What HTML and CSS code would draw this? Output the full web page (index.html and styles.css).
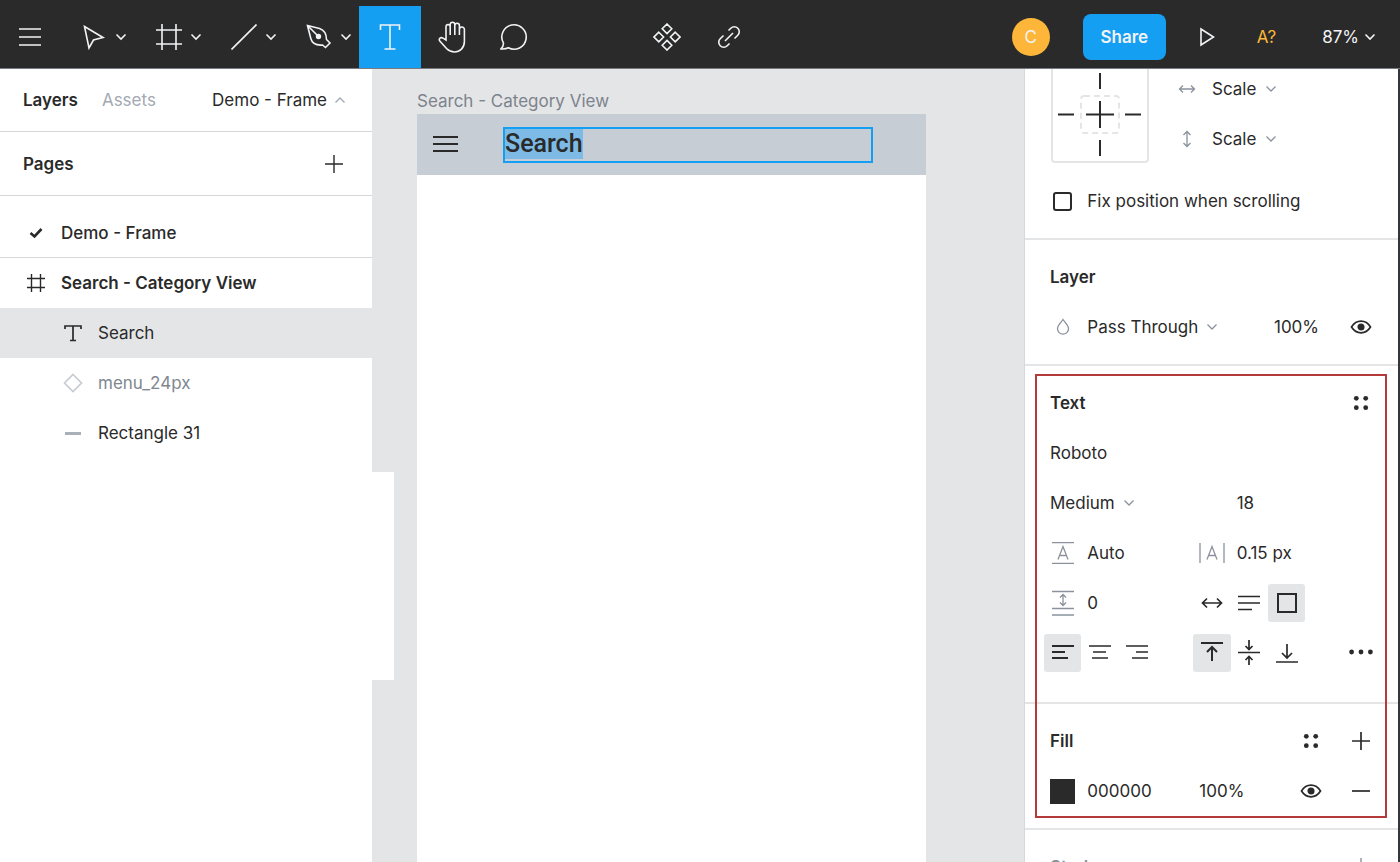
FILE: index.html
```html
<!DOCTYPE html>
<html lang="en">
<head>
<meta charset="utf-8">
<title>Demo - Frame</title>
<link rel="stylesheet" href="styles.css">
</head>
<body>
<svg class="defs" aria-hidden="true">
  <symbol id="chev" viewBox="0 0 12 8"><path d="M1.500 1.500 6 6l4.500-4.500"/></symbol>
  <symbol id="eye" viewBox="0 0 22 16"><path d="M1.500 8C4 4 7.500 2.200 11 2.200S18 4 20.500 8C18 12 14.500 13.800 11 13.800S4 12 1.500 8z"/><circle cx="11" cy="8" r="2.700" fill="currentColor"/></symbol>
  <symbol id="dots" viewBox="0 0 18 18"><g fill="currentColor" stroke="none"><circle cx="4.300" cy="4.300" r="2.400"/><circle cx="13.700" cy="4.300" r="2.400"/><circle cx="4.300" cy="13.700" r="2.400"/><circle cx="13.700" cy="13.700" r="2.400"/></g></symbol>
  <symbol id="plus" viewBox="0 0 18 18"><path d="M9 0v18M0 9h18"/></symbol>
</svg>
<div class="app">
  <header class="toolbar">
    <nav class="tools" aria-label="Tools">
      <button class="tool menu" aria-label="Menu"><svg width="24" height="18" viewBox="0 0 24 18"><path d="M1 1h22M1 9h22M1 17h22"/></svg></button>
      <div class="tool-group">
        <button class="tool" aria-label="Move"><svg width="24" height="26" viewBox="0 0 24 26"><path d="M2.500 2.500 21 13.500l-9.500 2.500-4.500 8z"/></svg></button>
        <button class="more" aria-label="Move options"><svg width="12" height="8"><use href="#chev"/></svg></button>
      </div>
      <div class="tool-group">
        <button class="tool" aria-label="Frame"><svg width="26" height="26" viewBox="0 0 26 26"><path d="M6 0v26M20 0v26M0 6h26M0 20h26"/></svg></button>
        <button class="more" aria-label="Frame options"><svg width="12" height="8"><use href="#chev"/></svg></button>
      </div>
      <div class="tool-group">
        <button class="tool" aria-label="Line"><svg width="26" height="26" viewBox="0 0 26 26"><path d="M.5 25.500l25-25"/></svg></button>
        <button class="more" aria-label="Shape options"><svg width="12" height="8"><use href="#chev"/></svg></button>
      </div>
      <div class="tool-group">
        <button class="tool" aria-label="Pen"><svg width="26" height="26" viewBox="0 0 26 26"><path d="M1.500 1.500 13.500 4.500C18 6 20.500 9.500 20.500 15.500L24 19l-4.500 4.500-3-2.500C10.500 21.500 6 19 4.800 14.500zM1.500 1.500l10 10"/><circle cx="12.500" cy="12.500" r="1.900" fill="currentColor"/></svg></button>
        <button class="more" aria-label="Pen options"><svg width="12" height="8"><use href="#chev"/></svg></button>
      </div>
      <button class="tool wide active" aria-label="Text"><svg width="22" height="28" viewBox="0 0 22 28"><path d="M1.500 7V2h19v5M11 2v24M5.500 26h11"/></svg></button>
      <button class="tool wide" aria-label="Hand"><svg width="28" height="32" viewBox="0 0 28 32"><path d="M8 19V6a2 2 0 0 1 4.200-.500V14 3.500a2.300 2.300 0 0 1 4.600 0V14 4.500a2.200 2.200 0 0 1 4.600 0V14 8.500a2.200 2.200 0 0 1 5 0V20.500c0 6.500-4.500 10.500-9.900 10.500-3.500 0-6-1.500-8-3.500L1.800 20c-1.500-2.500 1-4.300 3.200-2.800z"/></svg></button>
      <button class="tool wide" aria-label="Comment"><svg width="28" height="28" viewBox="0 0 28 28"><path d="M.8 26c2-1.800 2.700-3.500 2.700-5.800a12.200 12.200 0 1 1 4.800 4.600c-2 1.200-4.700 1.400-7.500 1.200z"/></svg></button>
    </nav>
    <div class="middle">
      <button class="tool wide" aria-label="Create component"><svg width="28" height="28" viewBox="0 0 28 28"><path d="M14 1l4.800 4.800L14 10.600 9.200 5.800zM14 17.400l4.800 4.800L14 27l-4.800-4.800zM5.800 9.200l4.800 4.800-4.800 4.800L1 14zM22.200 9.200 27 14l-4.800 4.800-4.800-4.800z"/></svg></button>
      <button class="tool wide" aria-label="Create link"><svg width="24" height="24" viewBox="0 0 24 24"><path d="M11.500 5.500l2.300-2.300a4.900 4.900 0 0 1 7 7L17.500 13.500M6.500 10.500 3.200 13.800a4.900 4.900 0 0 0 7 7l2.300-2.300M8 16l8-8"/></svg></button>
    </div>
    <div class="account">
      <span class="avatar">C</span>
      <button class="share">Share</button>
      <button class="tool play" aria-label="Present"><svg width="16" height="20" viewBox="0 0 16 20"><path d="M2 2l12.500 8L2 18z"/></svg></button>
      <button class="missing">A?</button>
      <button class="zoom">87%<svg width="12" height="8"><use href="#chev"/></svg></button>
    </div>
  </header>
  <main class="workspace">
    <aside class="left">
      <div class="tabs">
        <button class="strong">Layers</button><button class="muted">Assets</button>
        <button class="page-toggle">Demo - Frame<svg class="up" width="12" height="8"><use href="#chev"/></svg></button>
      </div>
      <div class="pages-head"><h2>Pages</h2><button aria-label="Add page"><svg width="18" height="18"><use href="#plus"/></svg></button></div>
      <div class="pages"><button class="row medium"><span class="glyph"><svg class="tick" width="14" height="12" viewBox="0 0 14 12"><path d="M1.500 6l4 3.500 7-7.500"/></svg></span>Demo - Frame</button></div>
      <button class="row strong"><span class="glyph"><svg width="18" height="18" viewBox="0 0 18 18"><path d="M4.500 0v18M13.500 0v18M0 4.500h18M0 13.500h18"/></svg></span>Search - Category View</button>
      <button class="row child selected"><span class="glyph"><svg class="mid" width="18" height="18" viewBox="0 0 18 18"><path d="M1 5V2h16v3M9 2v14.500M6 16.500h6"/></svg></span>Search</button>
      <button class="row child component"><span class="glyph"><svg class="mid" width="20" height="20" viewBox="0 0 20 20"><path d="M10 1.500l8.500 8.500-8.500 8.500L1.500 10z"/></svg></span>menu_24px</button>
      <button class="row child"><span class="glyph"><i class="bar"></i></span>Rectangle 31</button>
      <div class="flyout"></div>
    </aside>
    <section class="canvas">
      <div class="frame-label">Search - Category View</div>
      <div class="frame">
        <div class="app-bar">
          <svg width="25" height="18" viewBox="0 0 25 18"><path d="M0 1h25M0 8h25M0 15h25"/></svg>
          <div class="edit-box"><span>Search</span></div>
        </div>
      </div>
    </section>
    <aside class="right">
      <section class="constraints">
        <div class="constraint-row">
          <div class="constraint-box"><svg width="98" height="94" viewBox="0 0 98 94"><rect class="dash" x="30" y="27" width="38" height="37" rx="3"/><path d="M49 4v16M49 71v16M7 45.500h16M74 45.500h16M49 32v27M35 45.500h28"/></svg></div>
          <div class="scales">
            <label><svg class="soft" width="24" height="12" viewBox="0 0 24 12"><path d="M5 6h14M8 2.500 4.500 6 8 9.500M16 2.500l3.500 3.500-3.500 3.500"/></svg><select aria-label="Horizontal constraint"><option>Scale</option></select><svg class="soft" width="12" height="8"><use href="#chev"/></svg></label>
            <label><svg class="soft" width="24" height="18" viewBox="0 0 24 18"><path d="M12 2v14M8.500 5 12 1.500 15.500 5M8.500 13l3.500 3.500 3.500-3.500"/></svg><select aria-label="Vertical constraint"><option>Scale</option></select><svg class="soft" width="12" height="8"><use href="#chev"/></svg></label>
          </div>
        </div>
        <div class="prop"><input class="check c1" type="checkbox" id="fix"><label class="c2 rest" for="fix">Fix position when scrolling</label></div>
      </section>
      <section class="panel">
        <div class="prop"><h2 class="c1 rest">Layer</h2></div>
        <div class="prop">
          <span class="c1 icon"><svg class="soft" width="14" height="18" viewBox="0 0 14 18"><path d="M7 1.500c2 3 5.500 6 5.500 9.200A5.500 5.500 0 0 1 7 16.200a5.500 5.500 0 0 1-5.500-5.500C1.500 7.500 5 4.500 7 1.500z"/></svg></span>
          <label class="c2 pick"><select aria-label="Blend mode"><option>Pass Through</option></select><svg class="soft" width="12" height="8"><use href="#chev"/></svg></label>
          <input class="c7 field" aria-label="Layer opacity" value="100%">
          <button class="c9 icon" aria-label="Toggle layer"><svg class="mid" width="22" height="16"><use href="#eye"/></svg></button>
        </div>
      </section>
      <div class="marked">
        <section class="panel text-panel">
          <div class="prop"><h2 class="c1 rest">Text</h2><button class="c9 icon" aria-label="Text styles"><svg width="18" height="18"><use href="#dots"/></svg></button></div>
          <div class="prop"><input class="c1 field long" aria-label="Font family" value="Roboto"></div>
          <div class="prop"><label class="c1 pick"><select aria-label="Font weight"><option>Medium</option></select><svg class="soft" width="12" height="8"><use href="#chev"/></svg></label><input class="c6 field" aria-label="Font size" value="18"></div>
          <div class="prop">
            <span class="c1 icon"><svg class="soft" width="22" height="22" viewBox="0 0 22 22"><path d="M0 .5h22M0 21.500h22M6 17.500 11 4.500l5 13M7.500 13.500h7"/></svg></span><input class="c2 field" aria-label="Line height" value="Auto">
            <span class="c5 icon"><svg class="soft" width="26" height="20" viewBox="0 0 26 20"><path d="M1 0v20M25 0v20M8 16.500 13 3.500l5 13M9.500 12.500h7"/></svg></span><input class="c6 field" aria-label="Letter spacing" value="0.15 px">
          </div>
          <div class="prop">
            <span class="c1 icon"><svg class="soft" width="22" height="26" viewBox="0 0 22 26"><path d="M0 1.500h22M0 18.500h22M0 25h22M11 4.500v11M8 7.500l3-3 3 3M8 12.500l3 3 3-3"/></svg></span><input class="c2 field" aria-label="Paragraph spacing" value="0">
            <button class="c5 icon" aria-label="Auto width"><svg class="mid" width="22" height="12" viewBox="0 0 22 12"><path d="M1.500 6h19M6 1.500 1.500 6 6 10.500M16 1.500 20.500 6 16 10.500"/></svg></button>
            <button class="c6 icon" aria-label="Auto height"><svg class="mid" width="22" height="16" viewBox="0 0 22 16"><path d="M0 1.500h22M0 8h22M0 14.500h14"/></svg></button>
            <button class="c7 icon on" aria-label="Fixed size"><svg class="bold" width="20" height="20" viewBox="0 0 20 20"><path d="M1 1h18v18H1z"/></svg></button>
          </div>
          <div class="prop">
            <button class="c1 icon on" aria-label="Align left"><svg class="bold" width="22" height="16" viewBox="0 0 22 16"><path d="M0 1h22M0 7h13M0 13h16"/></svg></button>
            <button class="c2 icon" aria-label="Align center"><svg class="mid" width="22" height="16" viewBox="0 0 22 16"><path d="M0 1h22M4 7h13M3 13h16"/></svg></button>
            <button class="c3 icon" aria-label="Align right"><svg class="mid" width="22" height="16" viewBox="0 0 22 16"><path d="M0 1h22M10 7h12M6 13h16"/></svg></button>
            <button class="c5 icon on" aria-label="Align top"><svg class="bold" width="22" height="22" viewBox="0 0 22 22"><path d="M0 1h22M11 19V5M6 10l5-5 5 5"/></svg></button>
            <button class="c6 icon" aria-label="Align middle"><svg class="mid" width="22" height="26" viewBox="0 0 22 26"><path d="M0 12.500h22M11 0v9M7.500 6 11 9.500 14.500 6M11 25v-8M7.500 20l3.500-3.500 3.500 3.500"/></svg></button>
            <button class="c7 icon" aria-label="Align bottom"><svg class="mid" width="22" height="22" viewBox="0 0 22 22"><path d="M0 20h22M11 2v13.500M6 11l5 5 5-5"/></svg></button>
            <button class="c9 icon" aria-label="More type settings"><svg class="ellipsis" width="24" height="8" viewBox="0 0 24 8"><circle cx="2.600" cy="3" r="2.400"/><circle cx="12" cy="3" r="2.400"/><circle cx="21.400" cy="3" r="2.400"/></svg></button>
          </div>
        </section>
        <section class="panel">
          <div class="prop"><h2 class="c1 rest">Fill</h2><button class="c8 icon" aria-label="Fill styles"><svg width="18" height="18"><use href="#dots"/></svg></button><button class="c9 icon" aria-label="Add fill"><svg class="mid" width="18" height="18"><use href="#plus"/></svg></button></div>
          <div class="prop"><button class="c1 icon" aria-label="Fill color"><i class="swatch"></i></button><input class="c2 field long" aria-label="Fill hex" value="000000"><input class="c5 field" aria-label="Fill opacity" value="100%"><button class="c8 icon" aria-label="Toggle fill"><svg class="mid" width="22" height="16"><use href="#eye"/></svg></button><button class="c9 icon" aria-label="Remove fill"><svg class="mid" width="18" height="18" viewBox="0 0 18 18"><path d="M0 9h18"/></svg></button></div>
        </section>
        <div class="highlight"></div>
      </div>
      <section class="panel stroke-panel"><div class="prop"><h2 class="c1 rest">Stroke</h2><button class="c9 icon" aria-label="Add stroke"><svg width="18" height="18"><use href="#plus"/></svg></button></div></section>
    </aside>
  </main>
</div>
</body>
</html>
```
FILE: styles.css
```css
* { box-sizing: border-box; }
body { margin: 0; font: 17px/24px Inter, sans-serif; color: #2a2a2a; overflow: hidden; }
button, input, select { font: inherit; color: inherit; background: none; border: 0; padding: 0; margin: 0; border-radius: 0; }
select { appearance: none; }
h2 { margin: 0; font-size: 17px; line-height: 24px; font-weight: 600; }
svg { display: block; flex: none; fill: none; stroke: currentColor; stroke-width: 1.4; }
.defs { position: absolute; width: 0; height: 0; }
.app { height: 100vh; display: flex; flex-direction: column; }
.bold { stroke-width: 2; }
.mid { stroke-width: 1.7; }
.soft { color: #8b929d; stroke-width: 1.3; }

.toolbar { flex: none; height: 69px; display: grid; grid-template-columns: 1fr auto 1fr; background: #2a2a2a; color: #f2f3f5; border-bottom: 1px solid #777c83; padding-top: 6px; }
.toolbar svg { stroke-width: 1.6; }
.tools, .middle, .account, .tool-group { display: flex; align-items: stretch; }
.tool { display: flex; align-items: center; justify-content: center; }
.menu { width: 59px; }
.tool-group { width: 75px; padding-left: 21px; }
.tool-group .tool { width: 28px; }
.more { width: 26px; display: flex; align-items: center; justify-content: center; }
.wide { width: 62px; }
.active { background: #159ff3; }
.middle { margin-right: 4px; }
.account { justify-content: flex-end; align-items: center; padding-right: 24px; }
.avatar { width: 38px; height: 38px; border-radius: 50%; background: #fdb639; text-align: center; line-height: 38px; margin-right: 33px; }
.share { width: 83px; height: 46px; border-radius: 8px; background: #159ff3; font-weight: 600; margin-right: 33px; }
.missing { color: #fdb639; margin: 0 46px 0 42px; }
.zoom { display: flex; align-items: center; gap: 5px; }

.workspace { flex: 1; min-height: 0; display: flex; }
.left { position: relative; width: 372px; flex: none; background: #fff; }
.tabs { display: flex; align-items: center; gap: 24px; height: 63px; padding: 0 26px 0 23px; border-bottom: 1px solid #d6d8db; }
.strong { font-weight: 600; }
.medium { font-weight: 500; }
.muted { color: #a3a9b3; }
.page-toggle { display: flex; align-items: center; gap: 7px; margin-left: auto; }
.up { transform: rotate(180deg); color: #a3a9b3; }
.pages-head { display: flex; align-items: center; justify-content: space-between; height: 64px; padding: 0 29px 0 23px; border-bottom: 1px solid #d6d8db; }
.pages { height: 62px; padding-top: 12px; border-bottom: 1px solid #d6d8db; }
.row { display: flex; align-items: center; width: 100%; height: 50px; padding-left: 24px; text-align: left; }
.glyph { display: flex; align-items: center; justify-content: center; width: 24px; margin-right: 13px; }
.tick { stroke-width: 2.6; }
.child { padding-left: 61px; }
.selected { background: #e4e5e7; }
.component { color: #808791; }
.component svg { color: #c7ccd4; }
.bar { width: 16px; height: 3px; background: #a9b0ba; }
.flyout { position: absolute; left: 100%; top: 403px; width: 22px; height: 208px; background: #fff; }

.canvas { flex: 1; min-width: 0; display: flex; flex-direction: column; padding: 20px 98px 0 45px; background: #e4e5e7; }
.frame-label { height: 25px; color: #7d838c; white-space: nowrap; }
.frame { flex: 1; background: #fff; }
.app-bar { display: flex; align-items: center; gap: 45px; height: 61px; padding: 0 53px 0 16px; background: #c7cdd5; }
.app-bar svg { stroke-width: 2; }
.edit-box { flex: 1; height: 36px; border: 2px solid #159ff3; font: 500 25px/30px Roboto, sans-serif; }
.edit-box span { display: inline-block; background: #7dbbe6; }

.right { width: 376px; flex: none; overflow: hidden; border-left: 1px solid #d6d8db; border-right: 2px solid #33363a; background: #fff; }
.constraints { border-bottom: 2px solid #e4e5e7; padding-bottom: 12px; }
.constraint-row { display: flex; gap: 26px; padding: 0 0 7px 26px; }
.constraint-box { width: 98px; height: 94px; border: 2px solid #e4e5e7; border-top: 0; border-radius: 0 0 4px 4px; }
.constraint-box svg { margin-left: -2px; stroke-width: 2; }
.dash { stroke: #e4e5e7; stroke-dasharray: 6 4; }
.scales { display: flex; flex-direction: column; }
.scales label { display: flex; align-items: center; height: 40px; gap: 8px; }
.scales label + label { height: 60px; }
.scales select { margin-left: 5px; }
.panel { padding: 12px 0; border-bottom: 2px solid #e4e5e7; }
.text-panel { padding-bottom: 24px; }
.prop { display: grid; grid-template-columns: repeat(9, 1fr); align-items: center; height: 50px; padding: 0 18px 0 19px; }
.prop > * { grid-row: 1; min-width: 0; }
.c1 { grid-column: 1; }
.c2 { grid-column: 2; }
.c3 { grid-column: 3; }
.c5 { grid-column: 5; }
.c6 { grid-column: 6; }
.c7 { grid-column: 7; }
.c8 { grid-column: 7 / 9; padding-left: 12px; }
.c9 { grid-column: 9; }
.rest { grid-column-end: 9; padding-left: 6px; }
.c1.rest { grid-column-end: 7; }
.pick { grid-column-end: span 4; display: flex; align-items: center; gap: 8px; padding-left: 6px; }
.field { grid-column-end: span 2; width: 100%; padding-left: 6px; }
.long { grid-column-end: span 3; }
.icon { display: flex; align-items: center; justify-content: center; height: 38px; }
.on { background: #e4e5e7; border-radius: 3px; }
.check { appearance: none; justify-self: center; width: 19px; height: 19px; border: 2px solid #2a2a2a; border-radius: 3px; }
.ellipsis { fill: currentColor; stroke: none; }
.swatch { width: 25px; height: 25px; background: #2a2a2a; }
.marked { position: relative; }
.highlight { position: absolute; inset: 8px 11px 12px 10px; border: 2px solid #b73a3a; pointer-events: none; }
.stroke-panel { color: #8b929d; }
```
